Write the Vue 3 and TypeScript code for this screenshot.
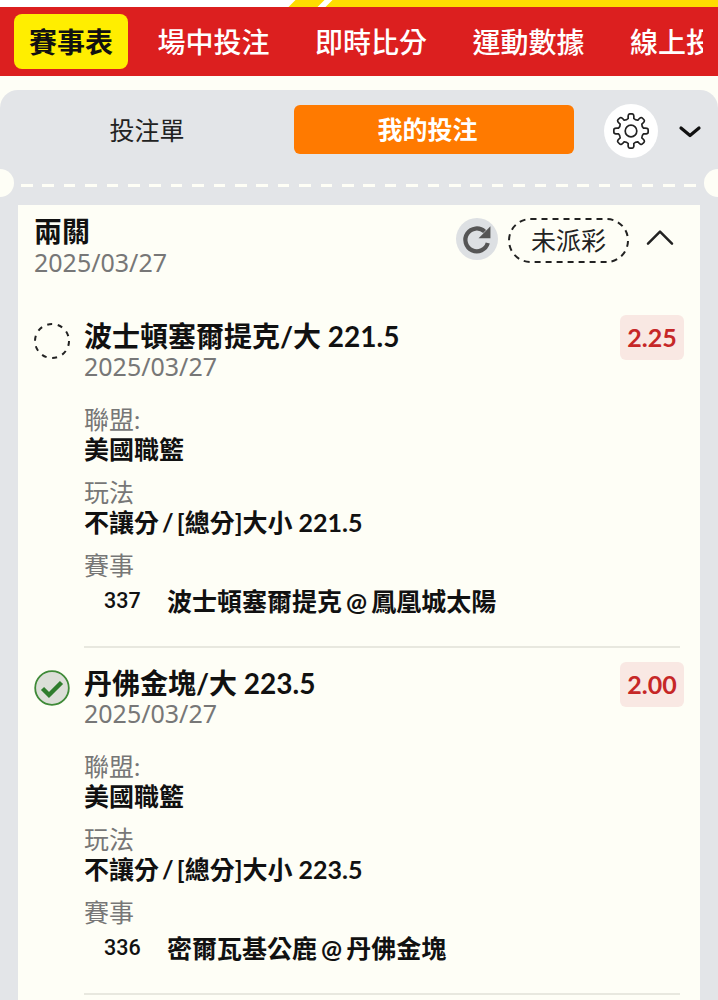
<script setup lang="ts">
const tabs = ['場中投注', '即時比分', '運動數據', '線上投注']
const bets = [
  { id: 1, title: '波士頓塞爾提克/大 221.5', odds: '2.25', win: false, total: '[總分]大小 221.5', no: '337', match: '波士頓塞爾提克 @ 鳳凰城太陽' },
  { id: 2, title: '丹佛金塊/大 223.5', odds: '2.00', win: true, total: '[總分]大小 223.5', no: '336', match: '密爾瓦基公鹿 @ 丹佛金塊' },
]
function gearPath(): string {
  const n = 8
  const R = 17.2
  const r = 12.8
  const s = (2 * Math.PI) / n
  const p = (rad: number, ang: number) => `${(20 + rad * Math.cos(ang)).toFixed(2)} ${(20 + rad * Math.sin(ang)).toFixed(2)}`
  let d = ''
  for (let i = 0; i < n; i++) {
    const a = i * s - Math.PI / 2
    d += `${i === 0 ? 'M' : ''}${p(r, a - s * 0.28)} `
    d += `Q${p(R + 0.3, a - s * 0.24)} ${p(R, a - s * 0.09)} `
    d += `L${p(R, a + s * 0.09)} `
    d += `Q${p(R + 0.3, a + s * 0.24)} ${p(r, a + s * 0.28)} `
    d += `Q${p(r - 1.2, a + s * 0.5)} `
  }
  const a0 = -Math.PI / 2
  d += `${p(r, a0 - s * 0.28)} Z`
  return d
}
const gear = gearPath()
</script>

<template>
  <div class="page">
    <div class="top">
      <i class="st s1"></i><i class="st s2"></i>
    </div>
    <nav class="nav">
      <span class="tab on">賽事表</span>
      <div class="scroll">
        <span v-for="t in tabs" :key="t" class="tab">{{ t }}</span>
      </div>
    </nav>
    <section class="panel">
      <div class="head">
        <div class="seg">投注單</div>
        <div class="seg active"><span>我的投注</span></div>
        <div class="gear">
          <svg width="40" height="40" viewBox="0 0 40 40" fill="none" stroke="#222" stroke-width="1.7" stroke-linejoin="round">
            <path :d="gear"/>
            <circle cx="20" cy="20" r="5.8"/>
          </svg>
        </div>
        <svg class="chev" width="24" height="24" viewBox="0 0 24 24" fill="none" stroke="#111" stroke-width="3.2" stroke-linecap="round" stroke-linejoin="round"><path d="M3 8l9 7.5 9-7.5"/></svg>
      </div>
      <div class="perf">
        <i class="notch l"></i>
        <div class="dash"></div>
        <i class="notch r"></i>
      </div>
      <div class="card">
        <div class="cardhead">
          <div>
            <div class="name">兩關</div>
            <div class="date">2025/03/27</div>
          </div>
          <div class="tools">
            <div class="refresh">
              <svg width="38" height="38" viewBox="0 0 24 24" fill="none" stroke="#555" stroke-width="2.7"><path d="M18.8 14.5a7.2 7.2 0 1 1-2-7.2"/><path d="M20.5 4v7.5h-7.5z" fill="#555" stroke="none"/></svg>
            </div>
            <div class="status">
              <svg class="pill" width="121" height="45" viewBox="0 0 121 45"><rect x="1" y="1" width="119" height="43" rx="21.5" fill="none" stroke="#222" stroke-width="2" stroke-dasharray="6 5"/></svg>
              <span>未派彩</span>
            </div>
            <svg class="up" width="32" height="32" viewBox="0 0 24 24" fill="none" stroke="#222" stroke-width="1.9" stroke-linecap="round" stroke-linejoin="round"><path d="M3 17l9-9 9 9"/></svg>
          </div>
        </div>
        <article v-for="b in bets" :key="b.id" class="bet">
          <div class="icon">
            <svg v-if="b.win" width="36" height="36" viewBox="0 0 36 36"><circle cx="18" cy="18" r="16.8" fill="#dcdfd8" stroke="#3f8a38" stroke-width="1.8"/><path d="M8.5 18.5l6.5 6.5 12.5-12.5" fill="none" stroke="#2f7d2d" stroke-width="4.4"/></svg>
            <svg v-else width="36" height="36" viewBox="0 0 36 36"><circle cx="18" cy="18" r="17" fill="none" stroke="#222" stroke-width="2" stroke-dasharray="5 5.68"/></svg>
          </div>
          <div class="body">
            <div class="titlerow">
              <div class="title">{{ b.title }}</div>
              <div class="odds">{{ b.odds }}</div>
            </div>
            <div class="date">2025/03/27</div>
            <div class="label first">聯盟:</div>
            <div class="val">美國職籃</div>
            <div class="label">玩法</div>
            <div class="val">不讓分<span class="sep"> / </span>{{ b.total }}</div>
            <div class="label">賽事</div>
            <div class="match"><span class="no">{{ b.no }}</span><span class="mname">{{ b.match }}</span></div>
          </div>
        </article>
      </div>
    </section>
  </div>
</template>

<style>
html, body { margin: 0; background: #fefef6; }
</style>

<style scoped>
.page { width: 718px; height: 1000px; overflow: hidden; background: #fefef6; font-family: Lato, "Noto Sans CJK TC", sans-serif; color: #111; }
.top { height: 7px; position: relative; background: #fff; overflow: hidden; }
.st { position: absolute; top: 0; height: 7px; background: #ffdc00; transform: skewX(-45deg); }
.s1 { left: 292px; width: 29px; }
.s2 { left: 329px; width: 500px; }
.nav { height: 69px; background: #dc1f1f; display: flex; align-items: center; padding-left: 14px; white-space: nowrap; }
.scroll { display: flex; gap: 45.5px; margin-left: 29.5px; width: 545.5px; overflow: hidden; }
.tab { color: #fff; font-size: 28px; font-weight: 500; line-height: 56px; flex: none; }
.tab.on { background: #ffee00; color: #111; font-weight: 700; width: 114px; text-align: center; border-radius: 8px; height: 55px; flex: none; }
.panel { margin-top: 14px; background: #e3e5e8; border-radius: 18px 18px 0 0; height: 910px; }
.head { height: 75px; box-sizing: border-box; padding-top: 7px; display: flex; align-items: center; }
.seg { font-size: 25px; font-weight: 400; color: #222; text-align: center; }
.seg:first-child { width: 296px; margin-bottom: 4px; padding-right: 2px; box-sizing: border-box; }
.seg.active { width: 280px; margin-left: -2px; height: 49px; line-height: 49px; background: #ff7a00; color: #fff; font-weight: 700; border-radius: 6px; padding-right: 13px; box-sizing: border-box; margin-bottom: 3px; }
.gear { width: 54px; height: 54px; border-radius: 50%; background: #fff; margin-left: 30px; margin-bottom: 1px; display: flex; align-items: center; justify-content: center; }
.chev { margin-left: 20px; margin-top: 1px; }
.perf { height: 40px; position: relative; display: flex; align-items: center; }
.dash { flex: 1; height: 3px; margin: 0 17px 0 21px; background: repeating-linear-gradient(90deg, #fefef6 0 11.5px, transparent 11.5px 21.4px); }
.notch { position: absolute; width: 28px; height: 28px; border-radius: 50%; background: #fefef6; top: 4px; }
.notch.l { left: -14px; }
.notch.r { right: -14px; }
.card { margin: 0 18px; background: #fefef6; padding: 0 16px; height: 800px; }
.cardhead { display: flex; justify-content: space-between; height: 117px; padding-top: 11px; box-sizing: border-box; }
.name { font-size: 28px; font-weight: 700; line-height: 31px; }
.date { font-family: "Noto Sans", sans-serif; font-size: 25px; line-height: 30px; color: #777; }
.tools { display: flex; align-items: flex-start; margin-top: 2px; }
.refresh { width: 42px; height: 42px; background: #dde0e3; border-radius: 50%; display: flex; align-items: center; justify-content: center; }
.status { margin-left: 10px; width: 121px; height: 45px; position: relative; font-size: 25px; line-height: 44px; text-align: center; color: #222; }
.pill { position: absolute; left: 0; top: 0; }
.up { margin-left: 15px; margin-top: 3px; margin-right: 8px; }
.bet { display: flex; }
.icon { width: 50px; flex: none; padding-top: 1px; }
.body { flex: 1; border-bottom: 2px solid #e8e8df; margin-right: 4px; padding-bottom: 28px; margin-bottom: 21px; }
.titlerow { display: flex; justify-content: space-between; align-items: flex-start; height: 29px; }
.title { font-size: 28px; font-weight: 700; line-height: 28px; }
.odds { margin-top: -7px; margin-right: -4px; background: #f9e8e3; color: #c62727; font-size: 25px; font-weight: 700; width: 64px; height: 45px; line-height: 45px; text-align: center; border-radius: 6px; }
.label { color: #777; font-size: 25px; line-height: 32px; margin-top: 13px; }
.label.first { margin-top: 22px; }
.val { font-size: 25px; line-height: 28px; font-weight: 700; }
.sep { word-spacing: -3px; }
.match { display: flex; font-size: 25px; font-weight: 700; line-height: 34px; margin-top: 3px; }
.mname { word-spacing: -2px; }
.no { width: 83px; padding-left: 20px; box-sizing: border-box; font-family: Roboto, sans-serif; font-size: 21.5px; font-weight: 500; flex: none; }
</style>
